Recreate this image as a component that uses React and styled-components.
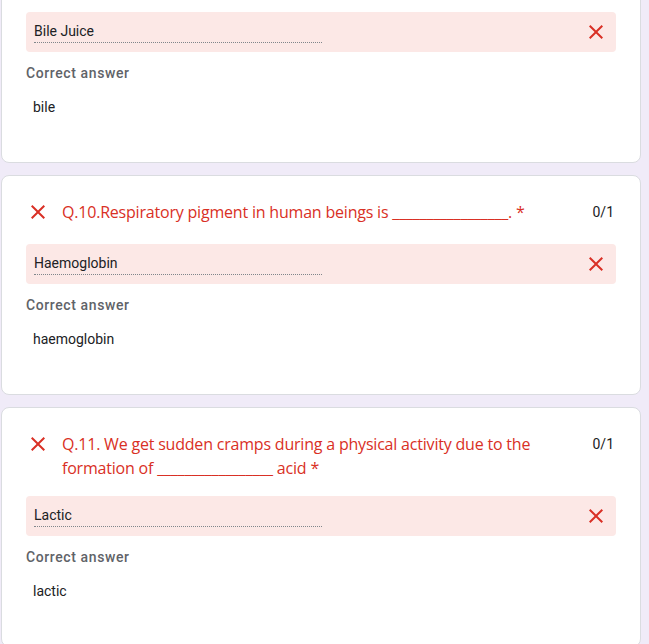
import React from "react";
import styled, { createGlobalStyle } from "styled-components";

const GlobalStyle = createGlobalStyle`
  html, body {
    margin: 0;
    padding: 0;
    background: #f0ebf8;
    overflow: hidden;
  }
  body {
    font-family: Roboto, "Liberation Sans", Arial, sans-serif;
  }
`;

const Page = styled.div`
  display: flex;
  flex-direction: column;
  gap: 12px;
  width: 640px;
  margin-top: -20px;
  margin-left: 1px;
`;

const Card = styled.div`
  background: #fff;
  border: 1px solid #dadce0;
  border-radius: 8px;
  padding: ${(p) => (p.$cut ? "31px" : "24px")} 24px 23px;
`;

const QuestionRow = styled.div`
  display: flex;
  align-items: flex-start;
  min-height: 28px;
  margin-bottom: 16px;
`;

const IconBox = styled.span`
  display: flex;
  align-items: center;
  justify-content: center;
  width: 24px;
  height: 24px;
  flex: none;
`;

const QuestionText = styled.div`
  flex: 1;
  margin-left: 12px;
  margin-right: 40px;
  font-family: "Open Sans", Roboto, sans-serif;
  font-size: 16px;
  line-height: 24px;
  color: #d93025;
  letter-spacing: -0.2px;
`;

const Required = styled.span`
  color: #d93025;
  padding-left: 4px;
`;

const Score = styled.div`
  flex: none;
  font-family: Roboto, sans-serif;
  font-size: 14px;
  line-height: 24px;
  color: #202124;
  padding-right: 2px;
`;

const AnswerBox = styled.div`
  display: flex;
  align-items: center;
  justify-content: space-between;
  height: 40px;
  box-sizing: border-box;
  padding: 0 8px;
  background: #fce8e6;
  border-radius: 4px;
`;

const Field = styled.div`
  width: 288px;
  align-self: flex-start;
  padding-top: 9px;
  padding-bottom: 1px;
  font-size: 14px;
  line-height: 20px;
  color: #202124;
  border-bottom: 1px dotted #80868b;
`;

const Label = styled.div`
  margin-top: 12px;
  font-family: Roboto, sans-serif;
  font-weight: 500;
  font-size: 14px;
  line-height: 18px;
  letter-spacing: 0.6px;
  color: #5f6368;
`;

const CorrectValue = styled.div`
  margin-top: 15px;
  padding-left: 7px;
  padding-bottom: 22px;
  font-size: 14px;
  line-height: 20px;
  color: #202124;
`;

const CloseIcon = () => (
  <svg width="24" height="24" viewBox="0 0 24 24" aria-hidden="true">
    <path
      fill="#d93025"
      d="M19 6.41L17.59 5 12 10.59 6.41 5 5 6.41 10.59 12 5 17.59 6.41 19 12 13.41 17.59 19 19 17.59 13.41 12z"
    />
  </svg>
);

const questions = [
  { id: 9, cut: true, answer: "Bile Juice", correct: "bile" },
  {
    id: 10,
    text: "Q.10.Respiratory pigment in human beings is _________________.",
    answer: "Haemoglobin",
    correct: "haemoglobin",
  },
  {
    id: 11,
    text: "Q.11. We get sudden cramps during a physical activity due to the formation of _________________ acid",
    answer: "Lactic",
    correct: "lactic",
  },
];

export default function App() {
  return (
    <>
      <GlobalStyle />
      <Page>
        {questions.map((q) => (
          <Card key={q.id} $cut={q.cut}>
            {!q.cut && (
              <QuestionRow>
                <IconBox>
                  <CloseIcon />
                </IconBox>
                <QuestionText>
                  {q.text}
                  <Required>*</Required>
                </QuestionText>
                <Score>0/1</Score>
              </QuestionRow>
            )}
            <AnswerBox>
              <Field>{q.answer}</Field>
              <IconBox>
                <CloseIcon />
              </IconBox>
            </AnswerBox>
            <Label>Correct answer</Label>
            <CorrectValue>{q.correct}</CorrectValue>
          </Card>
        ))}
      </Page>
    </>
  );
}
